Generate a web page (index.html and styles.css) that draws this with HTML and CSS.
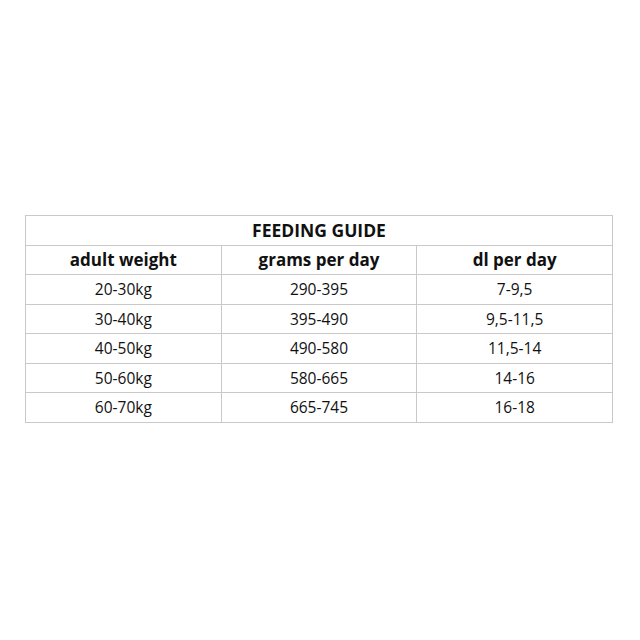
FILE: index.html
```html
<!DOCTYPE html>
<html>
<head>
<meta charset="utf-8">
<link rel="stylesheet" href="styles.css">
</head>
<body>
<div class="page">
  <table class="guide">
    <tr><th class="title" colspan="3">FEEDING GUIDE</th></tr>
    <tr><th>adult weight</th><th>grams per day</th><th>dl per day</th></tr>
    <tr><td>20-30kg</td><td>290-395</td><td>7-9,5</td></tr>
    <tr><td>30-40kg</td><td>395-490</td><td>9,5-11,5</td></tr>
    <tr><td>40-50kg</td><td>490-580</td><td>11,5-14</td></tr>
    <tr><td>50-60kg</td><td>580-665</td><td>14-16</td></tr>
    <tr><td>60-70kg</td><td>665-745</td><td>16-18</td></tr>
  </table>
</div>
</body>
</html>
```
FILE: styles.css
```css
html, body {
  margin: 0;
  padding: 0;
  background: #ffffff;
}
.page {
  width: 640px;
  height: 640px;
  padding: 215px 0 0 25px;
  box-sizing: border-box;
}
.guide {
  border-collapse: collapse;
  width: 588px;
  table-layout: fixed;
  font-family: "Open Sans", "Liberation Sans", sans-serif;
  color: #111111;
}
.guide th, .guide td {
  border: 1px solid #c9c9c9;
  height: 28.5px;
  padding: 0;
  text-align: center;
  vertical-align: middle;
  width: 33.33%;
}
.guide th {
  font-weight: 700;
  font-size: 17px;
}
.guide td {
  font-weight: 400;
  font-size: 15.5px;
}
.guide th.title {
  font-size: 17.5px;
}
```
